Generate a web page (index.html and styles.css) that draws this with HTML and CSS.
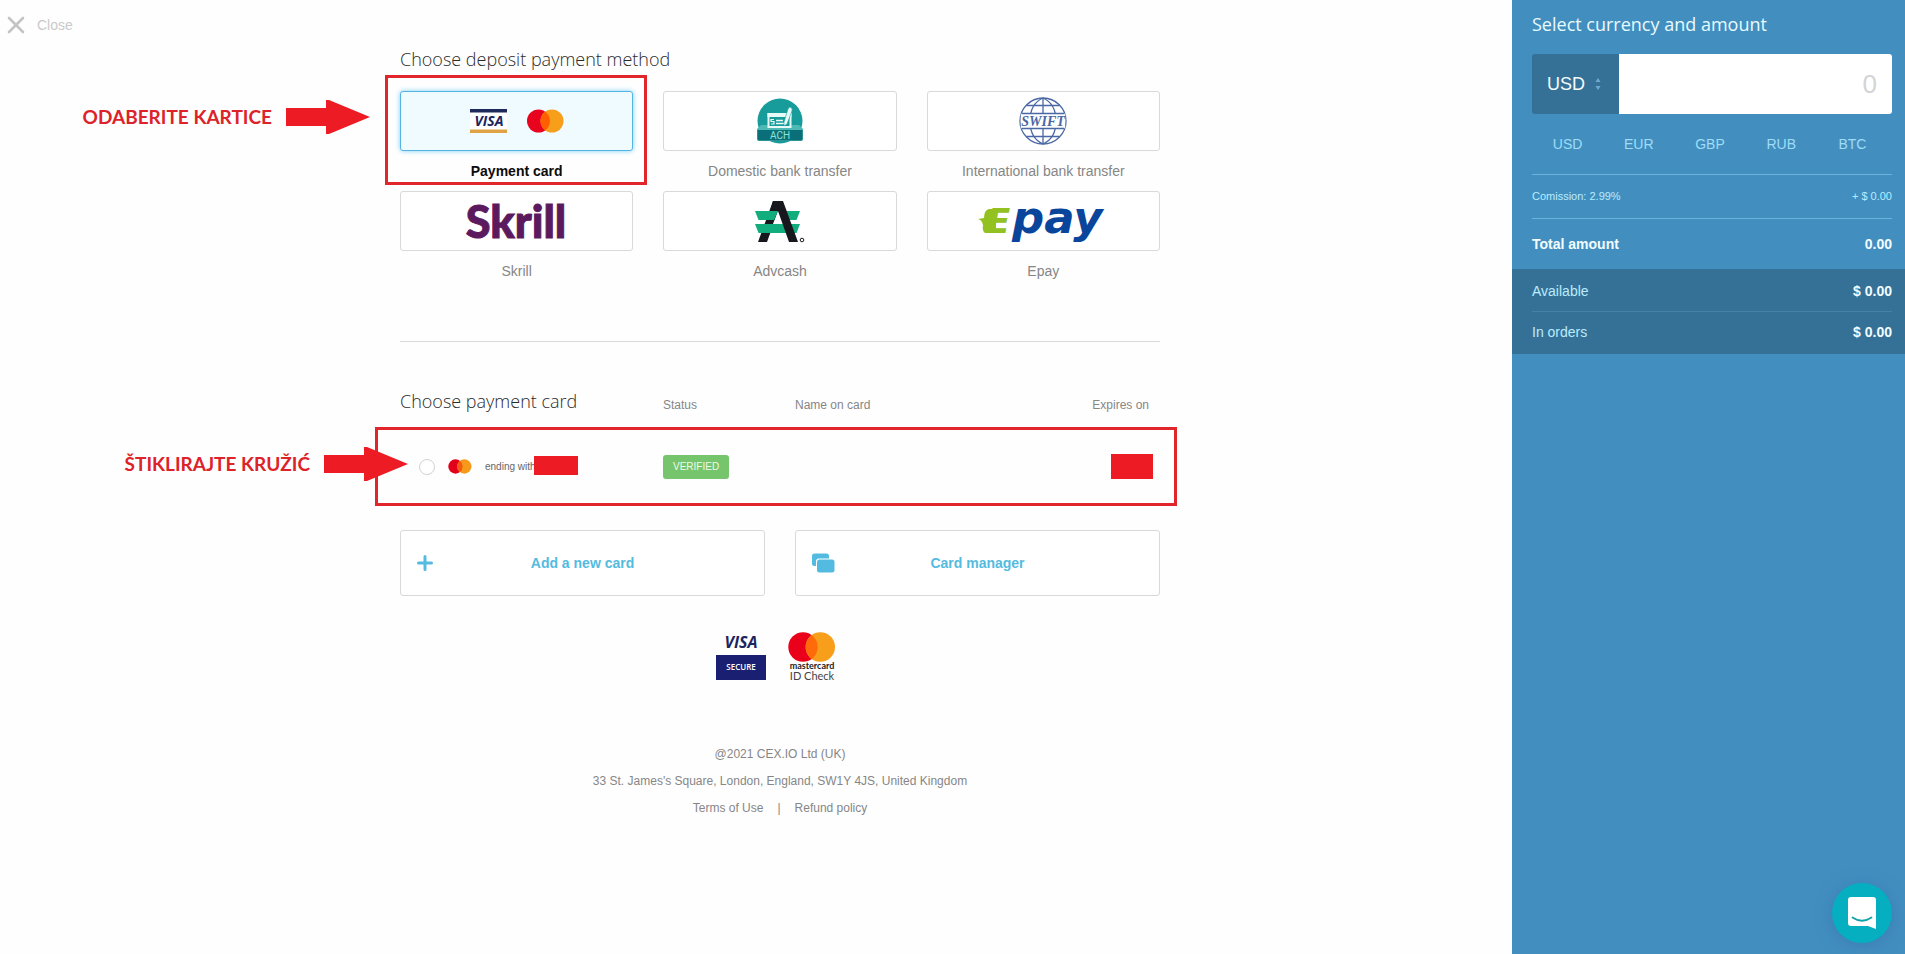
FILE: index.html
```html
<!DOCTYPE html>
<html lang="en">
<head>
<meta charset="utf-8">
<meta name="viewport" content="width=device-width, initial-scale=1">
<title>Deposit</title>
<link rel="stylesheet" href="styles.css">
</head>
<body>
<div class="page">
  <main class="main">
    <header class="topbar">
      <a class="close" href="#">
        <svg width="18" height="18" viewBox="0 0 18 18" aria-hidden="true"><path d="M2 2 16 16M16 2 2 16" stroke="#c4c4c4" stroke-width="2.600" stroke-linecap="round"/></svg>
        <span>Close</span>
      </a>
    </header>

    <div class="content">
      <section class="methods">
        <h1 class="heading">Choose deposit payment method</h1>
        <div class="method-grid">
          <div class="method-cell">
            <button class="method method-selected" type="button">
              <span class="tile">
                <svg width="94" height="24" viewBox="0 0 94 24" aria-hidden="true">
                  <path d="M0 0h37v24H0z" fill="#fff"/>
                  <path d="M0 0h37v3.500H0z" fill="#1f2a5c"/>
                  <path d="M0 20.500h37V24H0z" fill="#dfa346"/>
                  <text x="19" y="17" class="logo-visa" font-size="14" text-anchor="middle">VISA</text>
                  <circle cx="68.500" cy="12" r="11.500" fill="#e8041f"/>
                  <circle cx="82" cy="12" r="11.500" fill="#f79e1b"/>
                  <path d="M75.250 2.700a11.500 11.500 0 0 1 0 18.600a11.500 11.500 0 0 1 0-18.600z" fill="#ff5f00"/>
                </svg>
              </span>
              <span class="caption">Payment card</span>
            </button>
            <span class="frame frame-method"></span>
            <div class="note note-method">
              <span>ODABERITE KARTICE</span>
              <svg width="84" height="34" viewBox="0 0 84 34" aria-hidden="true"><path d="M0 8h40V0h3l41 17-41 17h-3v-8H0z" fill="#ed1c24"/></svg>
            </div>
          </div>

          <div class="method-cell">
            <button class="method" type="button">
              <span class="tile">
                <svg width="46" height="46" viewBox="0 0 46 46" aria-hidden="true">
                  <circle cx="23" cy="23" r="22.500" fill="#179c9b"/>
                  <path d="M0 31 4 27h38l4 4v10q0 2-2 2H2q-2 0-2-2z" fill="#4db9b5"/>
                  <path d="M.500 32h45v9q0 1.500-1.500 1.500H2Q.500 42.500.500 41z" fill="#0a6f78"/>
                  <rect x="11.500" y="16" width="22" height="13" fill="#179c9b" stroke="#e6fbf8" stroke-width="2"/>
                  <path d="M10.500 15h24v4h-24z" fill="#e6fbf8"/>
                  <path d="M19 22.500h7M19 25.500h8" stroke="#e6fbf8" stroke-width="1.500"/>
                  <path d="M17 21.500h-3v2h3v2.500h-3" stroke="#e6fbf8" stroke-width="1.200" fill="none"/>
                  <path d="M33 9q3 1 2 4l-5 13-3 2 0-4 4-13q1-2 2-2z" fill="#e6fbf8" stroke="#179c9b" stroke-width=".6"/>
                  <text x="23" y="41" class="logo-ach" font-size="10" text-anchor="middle">ACH</text>
                </svg>
              </span>
              <span class="caption">Domestic bank transfer</span>
            </button>
          </div>

          <div class="method-cell">
            <button class="method" type="button">
              <span class="tile">
                <svg width="48" height="48" viewBox="0 0 48 48" aria-hidden="true">
                  <g fill="none" stroke="#4a68a4" stroke-width="1.300">
                    <circle cx="24" cy="24" r="23"/>
                    <path d="M24 1v46M24 1C15 5 11 13 11 24s4 19 13 23M24 1c9 4 13 12 13 23s-4 19-13 23M7.500 8.500h33M7.500 39.500h33"/>
                  </g>
                  <path d="M1.800 16.500h44.400v15H1.800z" fill="#fff"/>
                  <path d="M2.500 16.500h43M2.500 31.500h43" stroke="#4a68a4" stroke-width="1.300"/>
                  <text x="24" y="29" class="logo-swift" font-size="14" text-anchor="middle">SWIFT</text>
                </svg>
              </span>
              <span class="caption">International bank transfer</span>
            </button>
          </div>

          <div class="method-cell">
            <button class="method" type="button">
              <span class="tile">
                <svg width="120" height="58" viewBox="0 0 120 58" aria-hidden="true"><text x="59" y="46" class="logo-skrill" font-size="45" text-anchor="middle">Skrill</text></svg>
              </span>
              <span class="caption">Skrill</span>
            </button>
          </div>

          <div class="method-cell">
            <button class="method" type="button">
              <span class="tile">
                <svg width="50" height="42" viewBox="0 0 50 42" aria-hidden="true">
                  <path d="M18 1h9L12 42H3z" fill="#16181d"/>
                  <path d="M0 11h22l-4 9H3.500zM31 11h14l-3.500 9H34zM0 24h45l-3.500 9h-38z" fill="#12ad7d"/>
                  <path d="M23 11 28 24H18z" fill="#fff"/>
                  <path d="M18 1h10l15 41h-9L23 11h-8z" fill="#16181d"/>
                  <path d="M10 11h13l-4 9h-9z" fill="#12ad7d"/>
                  <circle cx="47" cy="40" r="1.800" fill="none" stroke="#16181d"/>
                </svg>
              </span>
              <span class="caption">Advcash</span>
            </button>
          </div>

          <div class="method-cell">
            <button class="method" type="button">
              <span class="tile">
                <svg width="140" height="58" viewBox="0 0 140 58" aria-hidden="true">
                  <path d="M5 27l6-1q0-8 5-9h7v24H12q-3-2-2-8-1-5-5-6z" fill="#93c122"/>
                  <text x="14" y="41" class="logo-epay logo-epay-e" font-size="34">E</text>
                  <text x="39" y="41" class="logo-epay" font-size="45">pay</text>
                </svg>
              </span>
              <span class="caption">Epay</span>
            </button>
          </div>
        </div>
      </section>

      <section class="cards">
        <table class="card-table">
          <thead>
            <tr>
              <th class="col-card heading" scope="col">Choose payment card</th>
              <th class="col-status" scope="col">Status</th>
              <th scope="col">Name on card</th>
              <th class="col-expires" scope="col">Expires on</th>
            </tr>
          </thead>
          <tbody>
            <tr class="card-row">
              <td>
                <label class="card-pick">
                  <input class="radio" type="radio" name="card">
                  <svg width="24" height="15" viewBox="0 0 24 15" aria-hidden="true">
                    <circle cx="7.500" cy="7.500" r="7.200" fill="#e3001b"/>
                    <circle cx="16.300" cy="7.500" r="7.200" fill="#f79a1c"/>
                    <path d="M11.900 1.800a7.200 7.200 0 0 1 0 11.400a7.200 7.200 0 0 1 0-11.400z" fill="#f35a10"/>
                  </svg>
                  <span class="ending">ending with</span><span class="redact redact-number"></span>
                </label>
                <span class="frame frame-card"></span>
                <div class="note note-card">
                  <span>ŠTIKLIRAJTE KRUŽIĆ</span>
                  <svg width="84" height="34" viewBox="0 0 84 34" aria-hidden="true"><path d="M0 8h40V0h3l41 17-41 17h-3v-8H0z" fill="#ed1c24"/></svg>
                </div>
              </td>
              <td><span class="badge">VERIFIED</span></td>
              <td></td>
              <td class="expires"><span class="redact redact-date"></span></td>
            </tr>
          </tbody>
        </table>

        <div class="actions">
          <button class="action" type="button">
            <svg class="action-icon" width="16" height="16" viewBox="0 0 16 16" aria-hidden="true"><path d="M8 1.500v13M1.500 8h13" stroke="#54bbe0" stroke-width="3" stroke-linecap="round"/></svg>
            Add a new card
          </button>
          <button class="action" type="button">
            <svg class="action-icon" width="23" height="19" viewBox="0 0 23 19" aria-hidden="true"><rect width="17" height="12.500" rx="2.500" fill="#54bbe0"/><rect x="4" y="5" width="19" height="15" rx="3" fill="#fff"/><rect x="5" y="6" width="17.500" height="13" rx="2.500" fill="#54bbe0"/></svg>
            Card manager
          </button>
        </div>
      </section>

      <div class="seals">
        <svg width="50" height="45" viewBox="0 0 50 45" role="img" aria-label="Visa Secure">
          <text x="25" y="13" class="logo-visa" font-size="16" text-anchor="middle">VISA</text>
          <path d="M0 20h50v25H0z" fill="#1a1f71"/>
          <text x="25" y="35" class="logo-secure" font-size="8" text-anchor="middle">SECURE</text>
        </svg>
        <svg width="50" height="48" viewBox="0 0 50 48" role="img" aria-label="Mastercard ID Check">
          <circle cx="15" cy="15" r="14.700" fill="#eb001b"/>
          <circle cx="32.300" cy="15" r="14.700" fill="#f79e1b"/>
          <path d="M23.650 3.100a14.700 14.700 0 0 1 0 23.800a14.700 14.700 0 0 1 0-23.800z" fill="#ff6a0a"/>
          <text x="24" y="37" class="logo-mc" font-size="9" text-anchor="middle">mastercard</text>
          <text x="24" y="48" class="logo-id" font-size="11" text-anchor="middle">ID Check</text>
        </svg>
      </div>

      <footer class="footer">
        <p>@2021 CEX.IO Ltd (UK)</p>
        <p>33 St. James's Square, London, England, SW1Y 4JS, United Kingdom</p>
        <p class="links"><a href="#">Terms of Use</a><span>|</span><a href="#">Refund policy</a></p>
      </footer>
    </div>
  </main>

  <aside class="sidebar">
    <div class="panel">
      <h2 class="side-title">Select currency and amount</h2>
      <div class="amount">
        <div class="currency">
          <select class="currency-select" aria-label="Currency"><option>USD</option><option>EUR</option><option>GBP</option><option>RUB</option><option>BTC</option></select>
          <svg class="currency-arrows" width="6" height="12" viewBox="0 0 6 12" aria-hidden="true"><path d="M3 0 5.500 4h-5zM3 12 .500 8h5z" fill="#6fa9cf"/></svg>
        </div>
        <input class="amount-input" type="text" placeholder="0" aria-label="Amount">
      </div>
      <nav class="quick">
        <a href="#">USD</a><a href="#">EUR</a><a href="#">GBP</a><a href="#">RUB</a><a href="#">BTC</a>
      </nav>
      <div class="row fee"><span>Comission: 2.99%</span><span>+ $ 0.00</span></div>
      <div class="row total"><span>Total amount</span><span>0.00</span></div>
    </div>
    <div class="balances">
      <div class="row balance"><span>Available</span><strong>$ 0.00</strong></div>
      <div class="row balance"><span>In orders</span><strong>$ 0.00</strong></div>
    </div>
  </aside>
</div>

<button class="chat" type="button" aria-label="Open chat">
  <svg width="28" height="32" viewBox="0 0 28 32" aria-hidden="true"><path d="M3 0h22q3 0 3 3v29l-8-3H3q-3 0-3-3V3q0-3 3-3z" fill="#fff"/><path d="M4.500 20.500q9.500 6.500 19 0" fill="none" stroke="#12a3ac" stroke-width="1.800" stroke-linecap="round"/></svg>
</button>
</body>
</html>
```
FILE: styles.css
```css
* { box-sizing: border-box; }

body {
  margin: 0;
  background: #fefefe;
  color: #868686;
  font: 14px/20px "Liberation Sans", Arial, sans-serif;
}

button, input, select { font: inherit; color: inherit; }
button { cursor: pointer; }
a { color: inherit; text-decoration: none; }
svg { overflow: visible; }

.page { display: flex; min-height: 100vh; }
.main { flex: 1; min-width: 0; }

/* Top bar */
.topbar { display: flex; height: 47px; padding: 15px 7px; }
.close { display: flex; align-items: center; gap: 12px; height: 20px; color: #cacaca; }

/* 48px on the left is a gutter, the column is centred in the rest */
.content { max-width: 808px; margin: 0 auto; padding-left: 48px; }

.heading {
  margin: 0;
  color: #2b2b2b;
  font: 300 18px/24px "Open Sans", sans-serif;
}

/* Payment methods */
.method-grid {
  display: grid;
  grid-template-columns: repeat(3, 1fr);
  column-gap: 30px;
  margin-top: 20px;
}
.method-cell { position: relative; }
.method {
  display: block;
  width: 100%;
  padding: 0;
  border: 0;
  background: none;
}
.tile {
  display: flex;
  align-items: center;
  justify-content: center;
  height: 60px;
  border: 1px solid #d9d9d9;
  border-radius: 3px;
  background: #fff;
}
.caption { display: block; padding: 10px 0; }
.method-selected .tile {
  border-color: #55b3e2;
  background: #f0fbff;
  box-shadow: 0 0 5px #7cd0f5;
}
.method-selected .caption { color: #0b0b0b; font-weight: 700; }

/* Logo lettering */
.logo-visa { fill: #1b2560; font-family: "Open Sans", sans-serif; font-weight: 700; font-style: italic; }
.logo-ach { fill: #8fe3df; font-family: Roboto, sans-serif; }
.logo-swift { fill: #4a68a4; font-family: "Liberation Serif", serif; font-weight: 700; font-style: italic; }
.logo-skrill { fill: #5c1a5e; stroke: #5c1a5e; font-family: Lato, sans-serif; font-weight: 900; }
.logo-epay { fill: #08459b; font-family: "DejaVu Sans", sans-serif; font-weight: 700; font-style: italic; }
.logo-epay-e { fill: #93c122; }
.logo-secure { fill: #fff; font-family: "Open Sans", sans-serif; font-weight: 600; }
.logo-mc { fill: #222; font-family: Lato, sans-serif; font-weight: 700; }
.logo-id { fill: #444; font-family: Lato, sans-serif; }

/* Instruction overlays */
.frame { position: absolute; border: 3px solid #e0252b; pointer-events: none; }
.frame-method { inset: -16px -14px 6px -15px; }
.frame-card { inset: 0 -17px 0 -25px; }
.note {
  position: absolute;
  display: flex;
  align-items: center;
  color: #dc2329;
  font: 700 19px/34px Lato, sans-serif;
  white-space: nowrap;
  gap: 14px;
}
.note-method { top: 9px; right: calc(100% + 30px); }
.note-card { top: 20px; right: calc(100% - 8px); }
.redact { display: inline-block; background: #ed1c24; }
.redact-number { width: 44px; height: 19px; margin: 0 0 3px -2px; }
.redact-date { width: 42px; height: 25px; vertical-align: middle; }

/* Cards */
.cards { margin-top: 50px; border-top: 1px solid #dadada; padding-top: 40px; }
.card-table { width: 100%; border-collapse: collapse; table-layout: fixed; }
.card-table th {
  height: 45px;
  padding: 0;
  text-align: left;
  font-size: 12px;
  font-weight: 400;
}
.card-table th.heading { padding-top: 7px; font-size: 18px; font-weight: 300; vertical-align: top; }
.card-table td { height: 79px; padding: 0; }
.col-card { width: 263px; }
.col-status { width: 132px; }
.card-table th.col-expires { padding-right: 11px; text-align: right; }
.card-table td.expires { padding-right: 7px; text-align: right; }
.card-row { position: relative; }
.card-pick { display: flex; align-items: center; padding-left: 19px; }
.radio {
  width: 16px;
  height: 16px;
  margin: 0 13px 0 0;
  appearance: none;
  border: 1px solid #d2d2d2;
  border-radius: 50%;
  background: #fff;
}
.radio:checked { border: 5px solid #54bbe0; }
.ending { margin-left: 13px; font-size: 10px; white-space: nowrap; color: #666; }
.badge {
  display: inline-block;
  padding: 0 10px;
  border-radius: 3px;
  background: #76c56c;
  color: #effbe9;
  font-size: 10px;
  line-height: 24px;
  vertical-align: middle;
}

.actions { display: grid; grid-template-columns: 1fr 1fr; gap: 30px; margin-top: 24px; }
.action {
  position: relative;
  height: 66px;
  border: 1px solid #d9d9d9;
  border-radius: 3px;
  background: #fff;
  color: #54bbe0;
  font-weight: 700;
}
.action-icon { position: absolute; left: 16px; top: 50%; transform: translateY(-50%); }

.seals { display: flex; justify-content: center; align-items: flex-end; gap: 22px; padding-right: 6px; margin-top: 36px; }

.footer { margin-top: 61px; font-size: 12px; line-height: 27px; text-align: center; }
.footer p { margin: 0; }
.links { display: flex; justify-content: center; gap: 14px; }

/* Sidebar */
.sidebar { width: 393px; background: #428fbf; color: #b9ecff; }
.panel { padding: 12px 13px 0 20px; }
.side-title { margin: 0; color: #e8faff; font: 400 18px/24px "Open Sans", sans-serif; }
.amount { display: flex; height: 60px; margin-top: 18px; border-radius: 3px; overflow: hidden; }
.currency { position: relative; width: 87px; background: #357196; }
.currency-select {
  width: 100%;
  height: 100%;
  padding: 0 15px;
  border: 0;
  appearance: none;
  background: none;
  color: #f2fcff;
  font-size: 18px;
}
.currency-arrows { position: absolute; top: 24px; right: 18px; pointer-events: none; }
.amount-input {
  flex: 1;
  min-width: 0;
  padding: 0 15px;
  border: 0;
  background: #fff;
  color: #333;
  font-size: 26px;
  text-align: right;
}
.amount-input::placeholder { color: #d4d4d4; }
.quick { display: grid; grid-template-columns: repeat(5, 1fr); padding: 20px 4px 20px 0; text-align: center; color: #9edcf8; }
.row { display: flex; align-items: center; justify-content: space-between; }
.fee { height: 45px; padding-bottom: 2px; border: solid #6bb3dc; border-width: 1px 0; font-size: 11px; }
.total { height: 50px; color: #f2fdff; font-weight: 700; }
.balances { padding: 0 13px 0 20px; background: #357196; }
.balance { height: 42px; padding-top: 2px; }
.balance + .balance { height: 43px; padding: 0 0 3px; border-top: 1px solid #4681a5; }
.balance strong { color: #f2fdff; }

.chat {
  position: fixed;
  right: 13px;
  bottom: 11px;
  display: flex;
  align-items: center;
  justify-content: center;
  width: 60px;
  height: 60px;
  border: 0;
  border-radius: 50%;
  background: #05afbf;
  box-shadow: 0 2px 18px rgba(50, 90, 160, 0.35);
}
```
